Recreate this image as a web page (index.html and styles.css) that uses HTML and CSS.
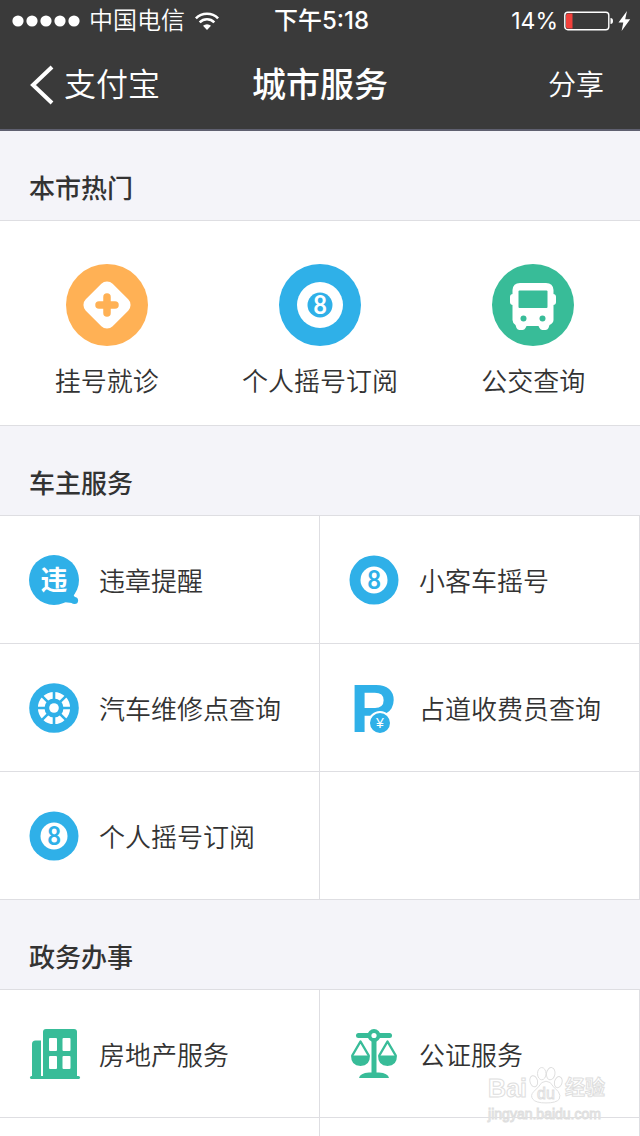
FILE: index.html
```
<!DOCTYPE html>
<html lang="zh-CN">

<head>
    <meta charset="UTF-8">
    <meta name="viewport" content="width=device-width, initial-scale=1.0">
    <title>城市服务</title>
    <link rel="stylesheet" href="styles.css">
</head>

<body>
    <div class="app">
        <header class="header">
            <div class="status-bar">
                <div class="status-left">
                    <svg class="signal" viewBox="0 0 68 12" fill="#fff">
                        <circle cx="6" cy="6" r="5.6" />
                        <circle cx="20" cy="6" r="5.6" />
                        <circle cx="34" cy="6" r="5.6" />
                        <circle cx="48" cy="6" r="5.6" />
                        <circle cx="62" cy="6" r="5.6" />
                    </svg>
                    <span class="carrier">中国电信</span>
                    <svg class="wifi" viewBox="0 0 24 18" fill="none" stroke="#fff" stroke-width="2.6">
                        <path d="M.9 6.3a15.7 15.7 0 0 1 22.2 0" />
                        <path d="M4.7 10.3a10.3 10.3 0 0 1 14.6 0" />
                        <path d="M12 18l-4-4.2a5.8 5.8 0 0 1 8 0z" fill="#fff" stroke="none" />
                    </svg>
                </div>
                <div class="time">下午5:18</div>
                <div class="status-right">
                    <span class="percent">14%</span>
                    <svg class="battery" viewBox="0 0 67 20">
                        <rect x=".8" y="1.3" width="44" height="17.4" rx="3" fill="none" stroke="#fff" stroke-width="1.4" />
                        <path d="M2 4.5q0-2 2-2h4.500v15H4q-2 0-2-2z" fill="#f2403b" />
                        <path d="M46.500 7q2.500 0 2.500 3t-2.500 3z" fill="#fff" />
                        <path d="M63 0l-8.500 11.500h4.800L57.600 20l8.600-11.800h-5z" fill="#fff" />
                    </svg>
                </div>
            </div>
            <nav class="nav-bar">
                <a class="back" href="#">
                    <svg class="back-arrow" viewBox="0 0 24 40" fill="none" stroke="#fff" stroke-width="4">
                        <path d="M22 2L3 20l19 18" />
                    </svg>
                    <span>支付宝</span>
                </a>
                <h1 class="nav-title">城市服务</h1>
                <button class="share" type="button">分享</button>
            </nav>
        </header>

        <main>
            <h2 class="section-title">本市热门</h2>
            <div class="hot">
                <a class="hot-item" href="#">
                    <svg class="hot-icon" viewBox="0 0 82 82">
                        <circle cx="41" cy="41" r="41" fill="#ffb155" />
                        <rect x="22" y="22" width="38" height="38" rx="8" fill="#fff" transform="rotate(45 41 41)" />
                        <path d="M41 33v16M33 41h16" stroke="#ffb155" stroke-width="7.500" stroke-linecap="round" />
                    </svg>
                    <span>挂号就诊</span>
                </a>
                <a class="hot-item" href="#">
                    <svg class="hot-icon" viewBox="0 0 82 82">
                        <circle cx="41" cy="41" r="41" fill="#2fb0e8" />
                        <circle cx="41" cy="41" r="23" fill="#fff" />
                        <circle cx="41" cy="41" r="12.500" fill="#2fb0e8" />
                        <text class="ball-number" x="41" y="50" font-size="25" fill="#fff">8</text>
                    </svg>
                    <span>个人摇号订阅</span>
                </a>
                <a class="hot-item" href="#">
                    <svg class="hot-icon" viewBox="0 0 82 82">
                        <circle cx="41" cy="41" r="41" fill="#38bc98" />
                        <rect x="18" y="30" width="46" height="11" rx="3" fill="#fff" />
                        <path d="M28 19h26q7 0 7.500 7v30q0 3-4 5l-1 3q-1 2-3 2h-3q-2 0-3-2l-1-2H34.500l-1 2q-1 2-3 2h-3q-2 0-3-2l-1-3q-3-2-3-5V26q.5-7 7.500-7z" fill="#fff" />
                        <rect x="26.500" y="26.500" width="29" height="17.500" rx="1" fill="#38bc98" />
                        <circle cx="31.500" cy="54.500" r="3" fill="#38bc98" />
                        <circle cx="50.500" cy="54.500" r="3" fill="#38bc98" />
                    </svg>
                    <span>公交查询</span>
                </a>
            </div>

            <h2 class="section-title">车主服务</h2>
            <div class="service-grid">
                <a class="service" href="#">
                    <svg class="service-icon" viewBox="0 0 50 50">
                        <circle cx="25" cy="25" r="25" fill="#2fb0e8" />
                        <path d="M34 47l9-9 5 7-5 3z" fill="#2fb0e8" />
                        <circle cx="45.500" cy="45.500" r="3.600" fill="#2fb0e8" />
                        <text class="icon-hanzi" x="25" y="35" font-size="27" fill="#fff">违</text>
                    </svg>
                    <span class="service-name">违章提醒</span>
                </a>
                <a class="service" href="#">
                    <svg class="service-icon" viewBox="0 0 50 50">
                        <circle cx="25" cy="25" r="24.500" fill="#2fb0e8" />
                        <circle cx="25" cy="25" r="13.500" fill="#fff" />
                        <text class="ball-number" x="25" y="34" font-size="25" fill="#2fb0e8">8</text>
                    </svg>
                    <span class="service-name">小客车摇号</span>
                </a>
                <a class="service" href="#">
                    <svg class="service-icon" viewBox="0 0 50 50">
                        <circle cx="25" cy="25" r="24.800" fill="#2fb0e8" />
                        <circle cx="25" cy="25" r="12.800" fill="none" stroke="#fff" stroke-width="6.600" />
                        <path d="M25 7v36M7 25h36M12.300 12.300l25.400 25.400M37.700 12.300L12.300 37.700" stroke="#2fb0e8" stroke-width="2.600" />
                        <circle cx="25" cy="25" r="8.500" fill="#2fb0e8" />
                        <circle cx="25" cy="25" r="4.800" fill="#fff" />
                    </svg>
                    <span class="service-name">汽车维修点查询</span>
                </a>
                <a class="service" href="#">
                    <svg class="service-icon" viewBox="0 0 50 50">
                        <text class="parking" x="1" y="49" font-size="69" fill="#2fb0e8">P</text>
                        <circle cx="31" cy="40" r="11" fill="#2fb0e8" stroke="#fff" stroke-width="2" />
                        <text class="icon-yen" x="31" y="45" font-size="14" fill="#fff">¥</text>
                    </svg>
                    <span class="service-name">占道收费员查询</span>
                </a>
                <a class="service" href="#">
                    <svg class="service-icon" viewBox="0 0 50 50">
                        <circle cx="25" cy="25" r="24.500" fill="#2fb0e8" />
                        <circle cx="25" cy="25" r="13.500" fill="#fff" />
                        <text class="ball-number" x="25" y="34" font-size="25" fill="#2fb0e8">8</text>
                    </svg>
                    <span class="service-name">个人摇号订阅</span>
                </a>
                <div class="service"></div>
            </div>

            <h2 class="section-title">政务办事</h2>
            <div class="service-grid">
                <a class="service" href="#">
                    <svg class="service-icon" viewBox="0 0 50 50" fill="#38bc98">
                        <path d="M3 47V15q0-3.500 3.500-3.500H12V47z" />
                        <path d="M14 47V3q0-3 3-3h28q3 0 3 3v44z" />
                        <rect x="1" y="47" width="50" height="3" rx="1.500" />
                        <g fill="#fff">
                            <rect x="20" y="9" width="8" height="13" rx="1" />
                            <rect x="33.500" y="9" width="8" height="13" rx="1" />
                            <rect x="20" y="27" width="8" height="13" rx="1" />
                            <rect x="33.500" y="27" width="8" height="13" rx="1" />
                        </g>
                    </svg>
                    <span class="service-name">房地产服务</span>
                </a>
                <a class="service" href="#">
                    <svg class="service-icon" viewBox="0 0 50 50" fill="#38bc98">
                        <rect x="7" y="4" width="36" height="5" rx="2.500" />
                        <circle cx="25" cy="6.500" r="6.500" />
                        <rect x="22.500" y="10" width="5" height="35" />
                        <path d="M10 49q1-5 10-5.500h10q9 .5 10 5.500z" />
                        <path d="M2 26.500h19q0 10.500-9.500 10.500T2 26.500zM29 26.500h19q0 10.500-9.500 10.500T29 26.500z" />
                        <path d="M3 27l8.500-14.500L20 27M30 27l8.500-14.500L47 27" fill="none" stroke="#38bc98" stroke-width="2.400" stroke-linejoin="round" />
                        <circle cx="25" cy="6.500" r="2.600" fill="#fff" />
                    </svg>
                    <span class="service-name">公证服务</span>
                </a>
                <div class="service"></div>
                <div class="service"></div>
            </div>
        </main>

        <div class="watermark">
            <div class="watermark-brand">
                <span class="watermark-latin">Bai</span>
                <svg class="paw" viewBox="0 0 36 40" fill="#fff" stroke="#dedede">
                    <ellipse cx="5" cy="16" rx="4" ry="6" transform="rotate(-15 5 16)" />
                    <ellipse cx="13.500" cy="8" rx="4.500" ry="6.500" />
                    <ellipse cx="23" cy="8" rx="4.500" ry="6.500" transform="rotate(10 23 8)" />
                    <ellipse cx="31" cy="17" rx="4" ry="6" transform="rotate(15 31 17)" />
                    <path d="M18 16q5 0 8 6l5 5q3 4 1 8-3 4-14 4T4 35q-3-4 1-8l5-5q3-6 8-6z" />
                    <text x="18" y="35" font-size="17" text-anchor="middle">du</text>
                </svg>
                <span class="watermark-cn">经验</span>
            </div>
            <div class="watermark-url">jingyan.baidu.com</div>
        </div>
    </div>
</body>

</html>
```
FILE: styles.css
```
* {
    margin: 0;
    padding: 0;
    box-sizing: border-box;
}

body {
    font-family: Inter, "Noto Sans CJK SC", sans-serif;
    font-size: 26px;
    font-weight: 350;
    line-height: 36px;
    color: #333;
    background: #f4f4f9;
}

a {
    color: inherit;
    text-decoration: none;
}

svg {
    display: block;
    flex: none;
    overflow: visible;
}

.app {
    position: relative;
    height: 100vh;
    overflow: hidden;
}

/* header */
.header {
    color: #fff;
    background: #3a3a3a;
    border-bottom: 2px solid #5f6070;
}

.status-bar {
    display: grid;
    grid-template-columns: 1fr auto 1fr;
    align-items: center;
    height: 41px;
    padding: 0 9px 0 12px;
    font-size: 24px;
}

.status-left,
.status-right {
    display: flex;
    align-items: center;
}

.status-right {
    justify-content: flex-end;
    gap: 6px;
}

.signal {
    width: 68px;
    height: 12px;
    margin-right: 9px;
}

.wifi {
    width: 24px;
    height: 18px;
    margin-left: 10px;
}

.time {
    font-weight: 500;
}

.percent {
    font-size: 23px;
    font-weight: 400;
}

.battery {
    width: 67px;
    height: 20px;
}

.nav-bar {
    display: grid;
    grid-template-columns: 1fr auto 1fr;
    align-items: center;
    height: 88px;
    padding: 0 36px 0 30px;
}

.back {
    display: flex;
    align-items: center;
    gap: 10px;
    font-size: 32px;
}

.back-arrow {
    width: 24px;
    height: 40px;
}

.nav-title {
    padding-left: 6px;
    font-size: 34px;
    font-weight: 500;
}

.share {
    justify-self: end;
    border: 0;
    background: transparent;
    color: #fff;
    font: inherit;
    font-size: 28px;
    cursor: pointer;
}

/* sections */
.section-title {
    padding: 40px 29px 13px;
    border-bottom: 1px solid #dedee2;
    font-size: 26px;
    font-weight: 500;
}

.hot {
    display: grid;
    grid-template-columns: repeat(3, 1fr);
    padding: 43px 0 25px;
    background: #fff;
    border-bottom: 1px solid #dedee2;
}

.hot-item {
    display: flex;
    flex-direction: column;
    align-items: center;
    gap: 18px;
}

.hot-icon {
    width: 82px;
    height: 82px;
}

.service-grid {
    display: grid;
    grid-template-columns: 1fr 1fr;
    background: #fff;
}

.service {
    display: flex;
    align-items: center;
    gap: 20px;
    height: 128px;
    padding: 0 29px;
    border-right: 1px solid #dedee2;
    border-bottom: 1px solid #dedee2;
}

.service-icon {
    width: 50px;
    height: 50px;
}

.service-name {
    padding-top: 4px;
}

/* text inside icons */
.ball-number {
    font-family: Roboto, sans-serif;
    font-weight: 500;
    text-anchor: middle;
}

.icon-hanzi {
    font-family: "Noto Sans CJK SC", sans-serif;
    font-weight: 700;
    text-anchor: middle;
}

.parking {
    font-family: "Liberation Sans", sans-serif;
    font-weight: 700;
}

.icon-yen {
    font-family: "Liberation Sans", sans-serif;
    text-anchor: middle;
}

/* watermark */
.watermark {
    position: absolute;
    right: 35px;
    bottom: 14px;
    color: #fff;
    font-family: "Liberation Sans", "Noto Sans CJK SC", sans-serif;
    font-weight: 400;
    -webkit-text-stroke: 1px #dedede;
    pointer-events: none;
}

.watermark-brand {
    display: flex;
    align-items: flex-end;
    gap: 2px;
    padding-bottom: 2px;
    line-height: 32px;
}

.watermark-latin {
    font-size: 25px;
    font-weight: 700;
}

.paw {
    width: 34px;
    height: 38px;
}

.watermark-cn {
    font-size: 20px;
    font-weight: 700;
}

.watermark-url {
    font-size: 14px;
    line-height: 16px;
}
```
